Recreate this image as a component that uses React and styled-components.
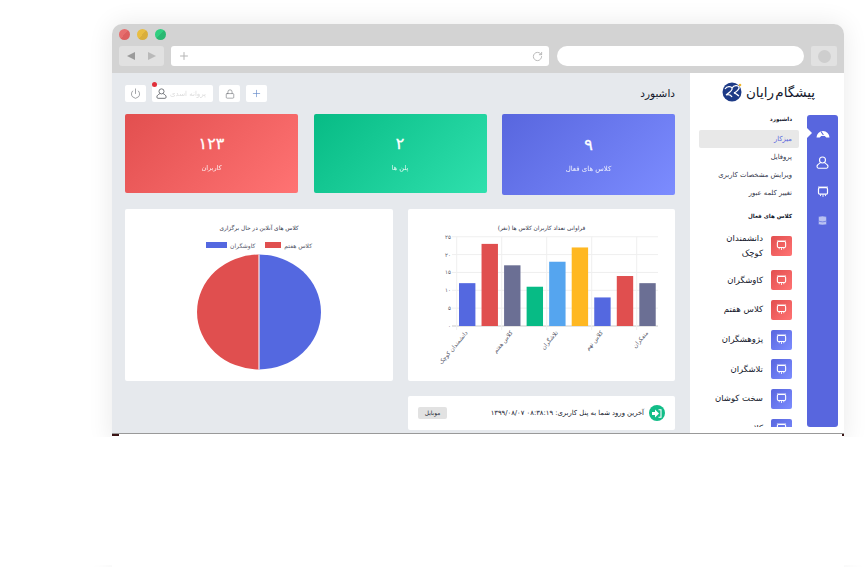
import React from 'react'
import styled, { createGlobalStyle } from 'styled-components'
import { Plus, Power, Lock, RotateCw, Database } from 'lucide-react'

const GlobalStyle = createGlobalStyle`
  html, body {
    margin: 0;
    padding: 0;
    background: #ffffff;
    overflow: hidden;
  }
  body {
    font-family: "DejaVu Sans", "Noto Sans", sans-serif;
  }
`

const Clip = styled.div`
  height: 437px;
  overflow: hidden;
  padding: 24px 24px 0 112px;
  box-sizing: border-box;
`

const Win = styled.div`
  width: 732px;
  height: 420px;
  border-radius: 10px 10px 0 0;
  box-shadow: 0 0 26px rgba(0, 0, 0, 0.09);
  background: #ffffff;
  display: flex;
  flex-direction: column;
`

const NextClip = styled.div`
  height: 2px;
  margin-top: 128px;
  overflow: hidden;
  padding: 0 24px 0 112px;
`

const NextWin = styled.div`
  width: 732px;
  height: 40px;
  background: #ffffff;
  box-shadow: 0 0 26px rgba(0, 0, 0, 0.09);
`

const Chrome = styled.header`
  height: 49px;
  box-sizing: border-box;
  padding: 5px 7px 7px;
  background: #d3d3d3;
  border-radius: 10px 10px 0 0;
  display: flex;
  flex-direction: column;
  gap: 6px;
`

const Lights = styled.div`
  display: flex;
  gap: 7px;
`

const Light = styled.span`
  width: 11px;
  height: 11px;
  border-radius: 50%;
  background: linear-gradient(135deg, ${(p) => p.$c} 50%, ${(p) => p.$d} 50%);
`

const NavRow = styled.div`
  display: flex;
  gap: 7px;
`

const NavButtons = styled.div`
  width: 45px;
  height: 20px;
  box-sizing: border-box;
  padding: 0 8px;
  border-radius: 3px;
  background: #e1e1e1;
  display: flex;
  align-items: center;
  justify-content: space-between;
  flex-shrink: 0;
`

const Arrow = styled.span`
  width: 0;
  height: 0;
  border-top: 4px solid transparent;
  border-bottom: 4px solid transparent;
  ${(p) => (p.$left ? 'border-right: 8px solid #9a9a9a;' : 'border-left: 8px solid #b9b9b9;')}
`

const Address = styled.div`
  width: 378px;
  height: 20px;
  box-sizing: border-box;
  padding: 0 6px 0 7px;
  border-radius: 3px;
  background: #ffffff;
  color: #b5b5b5;
  display: flex;
  align-items: center;
  justify-content: space-between;
  margin-right: 1px;
`

const Search = styled.div`
  width: 247px;
  height: 20px;
  border-radius: 10px;
  background: #ffffff;
`

const ExtButton = styled.div`
  width: 26px;
  height: 20px;
  border-radius: 2px;
  background: #e1e1e1;
  display: flex;
  align-items: center;
  justify-content: center;
  &::after {
    content: '';
    width: 13px;
    height: 13px;
    border-radius: 50%;
    background: #cecece;
  }
`

const Workspace = styled.div`
  direction: rtl;
  height: 361px;
  display: flex;
  overflow: hidden;
`

const Sidebar = styled.aside`
  width: 154px;
  flex-shrink: 0;
  box-sizing: border-box;
  padding: 0 6px 0 9px;
  background: #ffffff;
`

const Brand = styled.div`
  height: 42px;
  display: flex;
  align-items: center;
  justify-content: center;
  gap: 4px;
  padding-bottom: 4px;
  box-sizing: border-box;
`

const BrandName = styled.span`
  font-size: 13.5px;
  color: #14182c;
  word-spacing: -3px;
  white-space: nowrap;
`

const SideBody = styled.div`
  display: flex;
  gap: 8px;
  height: 312px;
  overflow: hidden;
`

const Rail = styled.nav`
  width: 31px;
  flex-shrink: 0;
  box-sizing: border-box;
  padding-top: 8px;
  border-radius: 3px;
  background: #5866de;
  display: flex;
  flex-direction: column;
  align-items: center;
  gap: 9.3px;
  position: relative;
  &::before {
    content: '';
    position: absolute;
    right: 100%;
    margin-right: -5px;
    top: 13px;
    border-top: 5px solid transparent;
    border-bottom: 5px solid transparent;
    border-left: 5px solid #ffffff;
  }
`

const RailIcon = styled.span`
  width: 20px;
  height: 20px;
  display: flex;
  align-items: center;
  justify-content: center;
  color: #ffffff;
`

const Menu = styled.div`
  width: 100px;
  flex-shrink: 0;
  display: flex;
  flex-direction: column;
  & > * {
    flex-shrink: 0;
  }
`

const MenuHead = styled.div`
  height: 15px;
  line-height: 9px;
  padding-right: 7px;
  font-size: 5.6px;
  font-weight: 700;
  color: #14182c;
  white-space: nowrap;
  margin-top: ${(p) => p.$top || 0}px;
`

const MenuItem = styled.div`
  height: 18px;
  line-height: 18px;
  padding-right: 7px;
  font-size: 6.8px;
  border-radius: 2px;
  white-space: nowrap;
  color: ${(p) => (p.$active ? '#5866de' : '#33364a')};
  background: ${(p) => (p.$active ? '#e8e8e8' : 'transparent')};
`

const ClassList = styled.div`
  display: flex;
  flex-direction: column;
  gap: 9.7px;
  margin-top: 3.5px;
  padding-right: 7px;
`

const ClassRow = styled.div`
  display: flex;
  align-items: center;
  gap: 8px;
  min-height: 20px;
`

const ClassBox = styled.span`
  width: 21px;
  height: 20px;
  flex-shrink: 0;
  border-radius: 2px;
  background: ${(p) =>
    p.$red
      ? 'linear-gradient(135deg, #e24f4f, #ff7373)'
      : 'linear-gradient(135deg, #5866de, #7c8cff)'};
  display: flex;
  align-items: center;
  justify-content: center;
`

const ClassName = styled.span`
  width: 60px;
  font-size: 8.5px;
  line-height: 15px;
  color: #14182c;
`

const Main = styled.main`
  flex: 1;
  min-width: 0;
  box-sizing: border-box;
  padding: 12px 15px 0 13px;
  background: #e6e9ed;
  display: flex;
  flex-direction: column;
`

const TopBar = styled.div`
  height: 17px;
  margin-bottom: 12px;
  display: flex;
  align-items: center;
  justify-content: space-between;
`

const PageTitle = styled.h1`
  margin: 0 0 2px;
  font-size: 10.5px;
  font-weight: 400;
  color: #14182c;
`

const Tools = styled.div`
  direction: ltr;
  display: flex;
  gap: 6px;
`

const Tool = styled.span`
  width: ${(p) => p.$w || 21}px;
  height: 17px;
  box-sizing: border-box;
  border-radius: 2px;
  background: #ffffff;
  color: ${(p) => p.$c || '#6d7075'};
  display: flex;
  align-items: center;
  justify-content: ${(p) => (p.$w ? 'flex-start' : 'center')};
  gap: 3px;
  padding-left: ${(p) => (p.$w ? 4 : 0)}px;
  position: relative;
`

const Dot = styled.span`
  position: absolute;
  top: -3px;
  left: 0;
  width: 5px;
  height: 5px;
  border-radius: 50%;
  background: #e0303a;
`

const Hidden = styled.span`
  font-size: 7px;
  color: #dcdcdc;
  filter: blur(0.5px);
  white-space: nowrap;
`

const Stats = styled.section`
  display: grid;
  grid-template-columns: repeat(3, 173px);
  justify-content: space-between;
  align-items: start;
  margin-bottom: 14px;
`

const Stat = styled.div`
  height: ${(p) => (p.$tall ? 81 : 79)}px;
  border-radius: 2px;
  color: #ffffff;
  background: linear-gradient(135deg, ${(p) => p.$from}, ${(p) => p.$to});
  display: flex;
  flex-direction: column;
  align-items: center;
  justify-content: center;
`

const StatValue = styled.div`
  font-size: 16px;
  line-height: 20px;
  margin-bottom: 8px;
  -webkit-text-stroke: 0.3px #ffffff;
`

const StatLabel = styled.div`
  font-size: ${(p) => (p.$tall ? 7 : 6.5)}px;
  line-height: 12px;
  opacity: 0.9;
`

const Charts = styled.section`
  display: grid;
  grid-template-columns: 267px 268px;
  justify-content: space-between;
  margin-bottom: 15px;
`

const ChartCard = styled.div`
  height: 172px;
  border-radius: 2px;
  background: #ffffff;
  display: flex;
  flex-direction: column;
  align-items: center;
`

const ChartTitle = styled.div`
  height: 24px;
  box-sizing: border-box;
  padding-top: 14px;
  font-size: 5.8px;
  line-height: 10px;
  color: #33364a;
  white-space: nowrap;
`

const Legend = styled.div`
  display: flex;
  justify-content: center;
  gap: 10px;
  height: 10px;
  margin-top: 7px;
`

const LegendItem = styled.div`
  display: flex;
  align-items: center;
  gap: 3px;
  font-size: 6px;
  color: #55586a;
  white-space: nowrap;
`

const Swatch = styled.span`
  width: ${(p) => p.$w}px;
  height: 6px;
  background: ${(p) => p.$c};
`

const LastLogin = styled.section`
  width: 267px;
  height: 34px;
  box-sizing: border-box;
  padding: 0 10px;
  border-radius: 2px;
  background: #ffffff;
  display: flex;
  align-items: center;
  justify-content: space-between;
`

const LoginInfo = styled.div`
  display: flex;
  align-items: center;
  gap: 5px;
  font-size: 6.8px;
  color: #14182c;
  white-space: nowrap;
`

const LoginDot = styled.span`
  width: 16px;
  height: 16px;
  border-radius: 50%;
  background: #12bd88;
  display: flex;
  align-items: center;
  justify-content: center;
`

const Badge = styled.span`
  width: 29px;
  height: 12px;
  border-radius: 2px;
  background: #e2e2e2;
  color: #14182c;
  font-size: 5.8px;
  display: flex;
  align-items: center;
  justify-content: center;
`

const BaseLine = styled.div`
  height: 10px;
  border-top: 1px solid #999999;
  background: #ffffff;
  position: relative;
`

const Mark = styled.span`
  position: absolute;
  top: 0;
  height: 2px;
  background: #3a1414;
  ${(p) => (p.$right ? 'right: 0; width: 2px;' : 'left: 0; width: 7px;')}
`

const menuItems = ['پروفایل', 'ویرایش مشخصات کاربری', 'تغییر کلمه عبور']

const classes = [
  { name: 'دانشمندان کوچک', red: true },
  { name: 'کاوشگران', red: true },
  { name: 'کلاس هفتم', red: true },
  { name: 'پژوهشگران' },
  { name: 'تلاشگران' },
  { name: 'سخت کوشان' },
  { name: 'کلاس نهم' },
]

const bars = [
  [12, '#5468e0'],
  [23, '#e04f4f'],
  [17, '#6b6f94'],
  [11, '#07bb85'],
  [18, '#55a5ef'],
  [22, '#ffb822'],
  [8, '#5468e0'],
  [14, '#e04f4f'],
  [12, '#6b6f94'],
]

const xLabels = ['دانشمندان کوچک', 'کلاس هفتم', 'تلاشگران', 'کلاس نهم', 'متفکران']
const yLabels = ['۰', '۵', '۱۰', '۱۵', '۲۰', '۲۵']

function GaugeIcon() {
  return (
    <svg width="14" height="9" viewBox="0 0 14 9">
      <path d="M0.5 8.5a6.5 6.5 0 0 1 13 0h-3.2L8.8 7H5.2L3.7 8.5z" fill="#fff" />
      <path d="M7.4 6L5 2.5" stroke="#5866de" strokeWidth="1.1" />
    </svg>
  )
}

function UserIcon({ size = 13 }) {
  return (
    <svg width={size} height={size} viewBox="0 0 13 13" fill="none" stroke="currentColor" strokeWidth="1.1">
      <circle cx="6.5" cy="4" r="3" />
      <path d="M4.6 6.6C3 7.6 1 8.6 1 10.6c0 1 .5 1.6 1.4 1.6h8.2c.9 0 1.4-.6 1.4-1.6 0-2-2-3-3.6-4" />
    </svg>
  )
}

function ScreenIcon({ size = 12 }) {
  return (
    <svg width={size} height={size} viewBox="0 0 12 12" fill="none">
      <rect x="1.5" y="1.7" width="9" height="6.4" rx="1.2" stroke="#fff" strokeWidth="1.2" />
      <path d="M1 1h10" stroke="#fff" strokeWidth="0.8" />
      <path d="M3.5 8.5v1.6M6 8.5v2.4M8.5 8.5v1.6" stroke="#fff" strokeWidth="0.9" />
    </svg>
  )
}

function Logo() {
  return (
    <svg width="20" height="20" viewBox="0 0 20 20">
      <circle cx="10" cy="10" r="9.5" fill="#1d3a86" />
      <path d="M3 7c2-3 6-3 7-1s-3 5-6 7c3-1 5 0 6 2" stroke="#fff" strokeWidth="1.3" fill="none" />
      <path d="M10 6c2-3 6-3 7-1s-3 5-5 6c2 0 3 2 5 3" stroke="#fff" strokeWidth="1.3" fill="none" />
      <circle cx="18" cy="3" r="1.3" fill="#f3b82c" />
    </svg>
  )
}

function LoginArrow() {
  return (
    <svg width="10" height="9" viewBox="0 0 10 9">
      <path d="M0 3h3V0.5L7 4.5 3 8.5V6H0z" fill="#fff" />
      <path d="M6.5 0.7H9v7.6H6.5" stroke="#fff" strokeWidth="1.1" fill="none" />
    </svg>
  )
}

function BarChart() {
  const base = 93
  const unit = 3.57
  return (
    <svg width="267" height="148" viewBox="0 0 267 148">
      {yLabels.map((label, i) => {
        const y = base - i * 5 * unit
        return (
          <g key={label}>
            <line x1="44" x2="250" y1={y} y2={y} stroke={i === 0 ? '#c9c9c9' : '#efefef'} />
            <text x="43" y={y + 2} fontSize="5.5" textAnchor="start" fill="#55586a">
              {label}
            </text>
          </g>
        )
      })}
      {[0, 1, 2, 3, 4].map((i) => (
        <line key={i} x1={48.7 + i * 45} x2={48.7 + i * 45} y1="3.7" y2="97" stroke="#efefef" />
      ))}
      {bars.map(([value, color], i) => (
        <rect
          key={i}
          x={51 + i * 22.54}
          y={base - value * unit}
          width="16.4"
          height={value * unit}
          fill={color}
        />
      ))}
      {xLabels.map((label, i) => {
        const x = 60 + i * 45.1
        return (
          <text
            key={label}
            x={x}
            y="100"
            fontSize="5.8"
            textAnchor="start"
            fill="#55586a"
            transform={`rotate(-50 ${x} 100)`}
          >
            {label}
          </text>
        )
      })}
    </svg>
  )
}

function PieChart() {
  return (
    <svg width="268" height="125" viewBox="0 0 268 125" style={{ display: 'block' }}>
      <path d="M134 4.5A62 57.5 0 0 1 134 119.5z" fill="#5468e0" />
      <path d="M134 4.5A62 57.5 0 0 0 134 119.5z" fill="#e04f4f" />
      <line x1="134" x2="134" y1="4.5" y2="119.5" stroke="#fbe9e9" strokeWidth="1.2" />
    </svg>
  )
}

export default function App() {
  return (
    <>
      <GlobalStyle />
      <Clip>
        <Win>
          <Chrome>
            <Lights>
              <Light $c="#e66e6e" $d="#dc6060" />
              <Light $c="#e8bd42" $d="#d9ae3c" />
              <Light $c="#30cf80" $d="#2ab872" />
            </Lights>
            <NavRow>
              <NavButtons>
                <Arrow $left />
                <Arrow />
              </NavButtons>
              <Address>
                <Plus size={12} strokeWidth={2} />
                <RotateCw size={11} strokeWidth={2} />
              </Address>
              <Search />
              <ExtButton />
            </NavRow>
          </Chrome>
          <Workspace>
            <Sidebar>
              <Brand>
                <BrandName>پیشگام رایان</BrandName>
                <Logo />
              </Brand>
              <SideBody>
                <Rail>
                  <RailIcon>
                    <GaugeIcon />
                  </RailIcon>
                  <RailIcon>
                    <UserIcon />
                  </RailIcon>
                  <RailIcon>
                    <ScreenIcon />
                  </RailIcon>
                  <RailIcon>
                    <Database size={11} strokeWidth={1.5} color="#5866de" fill="#b9c1f2" />
                  </RailIcon>
                </Rail>
                <Menu>
                  <MenuHead>داشبورد</MenuHead>
                  <MenuItem $active>میزکار</MenuItem>
                  {menuItems.map((item) => (
                    <MenuItem key={item}>{item}</MenuItem>
                  ))}
                  <MenuHead $top={10}>کلاس های فعال</MenuHead>
                  <ClassList>
                    {classes.map((c) => (
                      <ClassRow key={c.name}>
                        <ClassBox $red={c.red}>
                          <ScreenIcon size={11} />
                        </ClassBox>
                        <ClassName>{c.name}</ClassName>
                      </ClassRow>
                    ))}
                  </ClassList>
                </Menu>
              </SideBody>
            </Sidebar>
            <Main>
              <TopBar>
                <PageTitle>داشبورد</PageTitle>
                <Tools>
                  <Tool>
                    <Power size={11} strokeWidth={1.4} />
                  </Tool>
                  <Tool $w={61}>
                    <Dot />
                    <UserIcon size={11} />
                    <Hidden>پروانه اسدی</Hidden>
                  </Tool>
                  <Tool>
                    <Lock size={10} strokeWidth={1.4} />
                  </Tool>
                  <Tool $c="#5f86c9">
                    <Plus size={11} strokeWidth={1.4} />
                  </Tool>
                </Tools>
              </TopBar>
              <Stats>
                <Stat $tall $from="#5866de" $to="#7c8cff">
                  <StatValue>۹</StatValue>
                  <StatLabel $tall>کلاس های فعال</StatLabel>
                </Stat>
                <Stat $from="#07bb85" $to="#2fe0ad">
                  <StatValue>۲</StatValue>
                  <StatLabel>پلن ها</StatLabel>
                </Stat>
                <Stat $from="#e24f4f" $to="#ff7373">
                  <StatValue>۱۲۳</StatValue>
                  <StatLabel>کاربران</StatLabel>
                </Stat>
              </Stats>
              <Charts>
                <ChartCard>
                  <ChartTitle>فراوانی تعداد کاربران کلاس ها (نفر)</ChartTitle>
                  <BarChart />
                </ChartCard>
                <ChartCard>
                  <ChartTitle>کلاس های آنلاین در حال برگزاری</ChartTitle>
                  <Legend>
                    <LegendItem>
                      کلاس هفتم
                      <Swatch $w={16} $c="#e04f4f" />
                    </LegendItem>
                    <LegendItem>
                      کاوشگران
                      <Swatch $w={21} $c="#5468e0" />
                    </LegendItem>
                  </Legend>
                  <PieChart />
                </ChartCard>
              </Charts>
              <LastLogin>
                <LoginInfo>
                  <LoginDot>
                    <LoginArrow />
                  </LoginDot>
                  آخرین ورود شما به پنل کاربری: ۰۸:۳۸:۱۹ ۱۳۹۹/۰۸/۰۷
                </LoginInfo>
                <Badge>موبایل</Badge>
              </LastLogin>
            </Main>
          </Workspace>
          <BaseLine>
            <Mark />
            <Mark $right />
          </BaseLine>
        </Win>
      </Clip>
      <NextClip>
        <NextWin />
      </NextClip>
    </>
  )
}
